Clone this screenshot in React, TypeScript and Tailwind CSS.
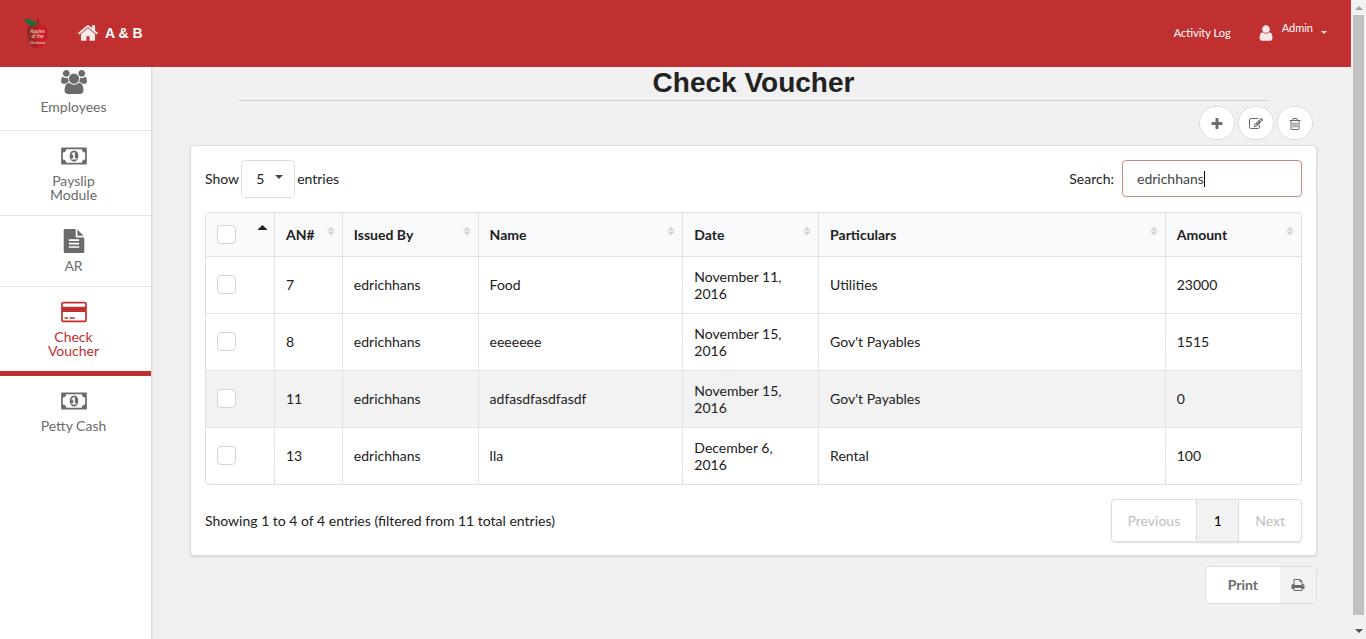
import { useState } from "react";
import clsx from "clsx";

type IconName = "home" | "users" | "money" | "file" | "card" | "plus" | "edit" | "trash" | "print" | "user";

const ICONS: Record<IconName, { w: number; d: string }> = {
  home: {
    w: 1792,
    d: "M1472 992v480q0 26-19 45t-45 19h-384v-384h-256v384h-384q-26 0-45-19t-19-45v-480q0-1 .5-3t.5-3l575-474 575 474q1 2 1 6zm223-69l-62 74q-8 9-21 11h-3q-13 0-21-7l-692-577-692 577q-12 8-24 7-13-2-21-11l-62-74q-8-10-7-23.5t11-21.5l719-599q32-26 76-26t76 26l244 204v-195q0-14 9-23t23-9h192q14 0 23 9t9 23v408l219 182q10 8 11 21.5t-7 23.5z",
  },
  users: {
    w: 1920,
    d: "M593 896q-162 5-265 128h-134q-82 0-138-40.5t-56-118.5q0-353 124-353 6 0 43.5 21t97.5 42.5 119 21.5q67 0 133-23-5 37-5 66 0 139 81 256zm1071 637q0 120-73 189.5t-194 69.5h-874q-121 0-194-69.5t-73-189.5q0-53 3.5-103.5t14-109 26.5-108.5 43-97.5 62-81 85.5-53.5 111.5-20q10 0 43 21.5t73 48 107 48 135 21.5 135-21.5 107-48 73-48 43-21.5q61 0 111.5 20t85.5 53.5 62 81 43 97.5 26.5 108.5 14 109 3.5 103.5zm-1024-1277q0 106-75 181t-181 75-181-75-75-181 75-181 181-75 181 75 75 181zm704 384q0 159-112.5 271.5t-271.5 112.5-271.5-112.5-112.5-271.5 112.5-271.5 271.5-112.5 271.5 112.5 112.5 271.5zm576 225q0 78-56 118.5t-138 40.5h-134q-103-123-265-128 81-117 81-256 0-29-5-66 66 23 133 23 59 0 119-21.5t97.5-42.5 43.5-21q124 0 124 353zm-128-609q0 106-75 181t-181 75-181-75-75-181 75-181 181-75 181 75 75 181z",
  },
  money: {
    w: 1920,
    d: "M768 1152h384v-96h-128v-448h-114l-148 137 77 80q42-37 55-57h2v288h-128v96zm512-256q0 70-21 142t-59.5 134-101.5 101-138 39-138-39-101.5-101-59.5-134-21-142 21-142 59.5-134 101.5-101 138-39 138 39 101.5 101 59.5 134 21 142zm512 256v-512q-106 0-181-75t-75-181h-1152q0 106-75 181t-181 75v512q106 0 181 75t75 181h1152q0-106 75-181t181-75zm128-832v1152q0 26-19 45t-45 19h-1792q-26 0-45-19t-19-45v-1152q0-26 19-45t45-19h1792q26 0 45 19t19 45z",
  },
  file: {
    w: 1792,
    d: "M1596 476q14 14 28 36h-472v-472q22 14 36 28zm-476 164h544v1056q0 40-28 68t-68 28h-1344q-40 0-68-28t-28-68v-1600q0-40 28-68t68-28h800v544q0 40 28 68t68 28zm160 736v-64q0-14-9-23t-23-9h-704q-14 0-23 9t-9 23v64q0 14 9 23t23 9h704q14 0 23-9t9-23zm0-256v-64q0-14-9-23t-23-9h-704q-14 0-23 9t-9 23v64q0 14 9 23t23 9h704q14 0 23-9t9-23zm0-256v-64q0-14-9-23t-23-9h-704q-14 0-23 9t-9 23v64q0 14 9 23t23 9h704q14 0 23-9t9-23z",
  },
  card: {
    w: 1920,
    d: "M1760 128q66 0 113 47t47 113v1216q0 66-47 113t-113 47h-1600q-66 0-113-47t-47-113v-1216q0-66 47-113t113-47h1600zm-1600 128q-13 0-22.5 9.5t-9.5 22.5v224h1664v-224q0-13-9.5-22.5t-22.5-9.5h-1600zm1600 1280q13 0 22.5-9.5t9.5-22.5v-608h-1664v608q0 13 9.5 22.5t22.5 9.5h1600zm-1504-128v-128h256v128h-256zm384 0v-128h384v128h-384z",
  },
  plus: {
    w: 1792,
    d: "M1600 736v192q0 40-28 68t-68 28h-416v416q0 40-28 68t-68 28h-192q-40 0-68-28t-28-68v-416h-416q-40 0-68-28t-28-68v-192q0-40 28-68t68-28h416v-416q0-40 28-68t68-28h192q40 0 68 28t28 68v416h416q40 0 68 28t28 68z",
  },
  edit: {
    w: 1792,
    d: "M888 1184l116-116-152-152-116 116v56h96v96h56zm440-720q-16-16-33 1l-350 350q-17 17-1 33t33-1l350-350q17-17 1-33zm80 594v190q0 119-84.5 203.5t-203.5 84.5h-832q-119 0-203.5-84.5t-84.5-203.5v-832q0-119 84.5-203.5t203.5-84.5h832q63 0 117 25 15 7 18 23 3 17-9 29l-49 49q-14 14-32 8-23-6-45-6h-832q-66 0-113 47t-47 113v832q0 66 47 113t113 47h832q66 0 113-47t47-113v-126q0-13 9-22l64-64q15-15 35-7t20 29zm-96-738l288 288-672 672h-288v-288zm444 132l-92 92-288-288 92-92q28-28 68-28t68 28l152 152q28 28 28 68t-28 68z",
  },
  trash: {
    w: 1792,
    d: "M704 736v576q0 14-9 23t-23 9h-64q-14 0-23-9t-9-23v-576q0-14 9-23t23-9h64q14 0 23 9t9 23zm256 0v576q0 14-9 23t-23 9h-64q-14 0-23-9t-9-23v-576q0-14 9-23t23-9h64q14 0 23 9t9 23zm256 0v576q0 14-9 23t-23 9h-64q-14 0-23-9t-9-23v-576q0-14 9-23t23-9h64q14 0 23 9t9 23zm128 724v-948h-896v948q0 22 7 40.5t14.5 27 10.5 8.5h832q3 0 10.5-8.5t14.5-27 7-40.5zm-672-1076h448l-48-117q-7-9-17-11h-317q-10 2-17 11zm928 32v64q0 14-9 23t-23 9h-96v948q0 83-47 143.5t-113 60.5h-832q-66 0-113-58.5t-47-141.5v-952h-96q-14 0-23-9t-9-23v-64q0-14 9-23t23-9h309l70-167q15-37 54-63t79-26h320q40 0 79 26t54 63l70 167h309q14 0 23 9t9 23z",
  },
  print: {
    w: 1792,
    d: "M448 1536h896v-256h-896v256zm0-640h896v-384h-160q-40 0-68-28t-28-68v-160h-640v640zm1152 64q0-26-19-45t-45-19-45 19-19 45 19 45 45 19 45-19 19-45zm128 0v416q0 13-9.5 22.5t-22.5 9.5h-224v160q0 40-28 68t-68 28h-960q-40 0-68-28t-28-68v-160h-224q-13 0-22.5-9.5t-9.5-22.5v-416q0-79 56.5-135.5t135.5-56.5h64v-544q0-40 28-68t68-28h672q40 0 88 20t76 48l152 152q28 28 48 76t20 88v256h64q79 0 135.5 56.5t56.5 135.5z",
  },
  user: {
    w: 1792,
    d: "M1536 1399q0 109-62.5 187t-150.5 78h-854q-88 0-150.5-78t-62.5-187q0-85 8.5-160.5t31.5-152 58.5-131 94-89 134.5-34.5q131 128 313 128t313-128q76 0 134.5 34.5t94 89 58.5 131 31.5 152 8.5 160.5zm-256-887q0 159-112.5 271.5t-271.5 112.5-271.5-112.5-112.5-271.5 112.5-271.5 271.5-112.5 271.5 112.5 112.5 271.5z",
  },
};

function Icon({ name, className }: { name: IconName; className: string }) {
  const { w, d } = ICONS[name];
  return (
    <svg aria-hidden="true" viewBox={`0 0 ${w} 1792`} className={clsx("shrink-0 fill-current", className)}>
      <path d={d} />
    </svg>
  );
}

function AppleLogo() {
  return (
    <svg aria-hidden="true" viewBox="0 0 24 32" className="h-8 w-6">
      <defs>
        <linearGradient id="apple" x1="0" x2="1">
          <stop offset="0" stopColor="#8a2a20" />
          <stop offset="0.4" stopColor="#a32420" />
          <stop offset="0.75" stopColor="#dc1c28" />
          <stop offset="1" stopColor="#b01c24" />
        </linearGradient>
      </defs>
      <path d="M13 9C9 6.500 3.500 8 3 14c-.4 6 2.500 14 6.500 16.500 1.500.9 2.500.1 4 .1s2.500.8 4-.1C21 28 23.600 20 23.300 14 23 8 17 6.500 13 9z" fill="url(#apple)" />
      <path d="M13.200 10C13.700 7 13.500 4.500 12.300 2.500l1.800-.5c1 2.500.9 5 .1 8z" fill="#7a2c1c" />
      <path d="M.5.800C3 3 10.500 1.500 12.800 8.300 8 9.500 1.500 8.500.5.800z" fill="#12703a" />
      <g fill="#e9b3ae" fontFamily="Liberation Sans, sans-serif" fontSize="4.500" fontStyle="italic" fontWeight="700" textAnchor="middle">
        <text x="13.500" y="15.500">Apples</text>
        <text x="13.500" y="21">of the</text>
        <text x="13.500" y="26.500" fontSize="4">Orchard</text>
      </g>
    </svg>
  );
}

function Caret({ className }: { className: string }) {
  return (
    <svg aria-hidden="true" viewBox="0 0 8 4" className={clsx("fill-current", className)}>
      <path d="M0 0h8L4 4z" />
    </svg>
  );
}

function SortMark({ ascending }: { ascending?: boolean }) {
  return ascending ? (
    <svg aria-hidden="true" viewBox="0 0 9 5" className="h-[5px] w-[9px] fill-[#222]">
      <path d="M4.500 0 9 4.200V5H0v-.8z" />
    </svg>
  ) : (
    <svg aria-hidden="true" viewBox="0 0 8 10" className="h-[10px] w-2 fill-[#d6d7d8]">
      <path d="M4 .5 7.500 4v.5h-7V4zM4 9.500.5 6v-.5h7V6z" />
    </svg>
  );
}

const NAV: { label: string; icon: IconName; active?: boolean }[] = [
  { label: "Employees", icon: "users" },
  { label: "Payslip Module", icon: "money" },
  { label: "AR", icon: "file" },
  { label: "Check Voucher", icon: "card", active: true },
  { label: "Petty Cash", icon: "money" },
];

const COLUMNS = [
  { label: "AN#", width: "w-[6.2%]" },
  { label: "Issued By", width: "w-[12.4%]" },
  { label: "Name", width: "w-[18.7%]" },
  { label: "Date", width: "w-[12.4%]" },
  { label: "Particulars", width: "w-auto" },
  { label: "Amount", width: "w-[12.4%]" },
];

const ROWS = [
  ["7", "edrichhans", "Food", "November 11, 2016", "Utilities", "23000"],
  ["8", "edrichhans", "eeeeeee", "November 15, 2016", "Gov't Payables", "1515"],
  ["11", "edrichhans", "adfasdfasdfasdf", "November 15, 2016", "Gov't Payables", "0"],
  ["13", "edrichhans", "lla", "December 6, 2016", "Rental", "100"],
];

function Checkbox({ label }: { label: string }) {
  return (
    <input
      type="checkbox"
      aria-label={label}
      className="block size-[19px] appearance-none rounded-[4px] border border-[#d4d4d5] bg-white checked:bg-[#c03030]"
    />
  );
}

function RoundButton({ icon, label }: { icon: IconName; label: string }) {
  return (
    <button
      type="button"
      aria-label={label}
      className="flex h-[34px] w-9 items-center justify-center rounded-full border border-[#dededf] bg-white pt-px text-[#6b6b6b]"
    >
      <Icon name={icon} className="size-[14px]" />
    </button>
  );
}

export default function App() {
  const [query, setQuery] = useState("edrichhans");

  return (
    <div className="flex min-h-screen bg-[#f1f1f1] font-[Lato,sans-serif] text-sm text-[#212121]">
      <div className="flex min-w-0 flex-1 flex-col">
        <header className="flex h-[67px] items-center bg-[#c03030] pr-6 pb-px pl-6 text-white/90">
          <AppleLogo />
          <a href="#home" className="ml-[29px] flex items-center font-[Liberation_Sans,sans-serif] font-bold text-white">
            <Icon name="home" className="mr-[6px] size-[22px] text-white/90" />
            <span>A &amp; B</span>
          </a>
          <a href="#activity" className="ml-auto text-[11px] text-white">
            Activity Log
          </a>
          <button type="button" className="ml-[26px] flex items-center text-[11px]">
            <Icon name="user" className="size-[18px]" />
            <span className="mb-[10px] ml-[7px] text-white">Admin</span>
            <Caret className="ml-2 h-[3px] w-[6px]" />
          </button>
        </header>

        <div className="flex flex-1">
          <nav className="w-[152px] shrink-0 border-r border-[#dcdcdc] bg-white leading-[14px] text-[#6b6b6b] shadow-[1px_0_0_0_#e4e4e4]">
            {NAV.map((item, index) => (
              <a
                key={item.label}
                href={`#${item.icon}`}
                className={clsx(
                  "flex flex-col items-center gap-[6px] pr-10 pl-9 text-center",
                  index === 0 ? "pt-[3px] pb-4" : "py-[13px]",
                  item.active && "border-b-[5px] border-[#c03030] text-[#c03030]",
                  !item.active && index < NAV.length - 1 && "border-b border-[#e4e4e5]",
                )}
              >
                <Icon name={item.icon} className="h-6 w-[26px]" />
                <span>{item.label}</span>
              </a>
            ))}
          </nav>

          <main className="min-w-0 flex-1 pr-[34px] pl-[38px]">
            <h1 className="mx-[49px] border-b border-[#d0d0d1] pb-[2px] text-center font-[Liberation_Sans,sans-serif] text-[28px] leading-[31px] font-bold text-[#222]">
              Check Voucher
            </h1>

            <div className="mt-[5px] mr-1 flex justify-end gap-[3px]">
              <RoundButton icon="plus" label="Add voucher" />
              <RoundButton icon="edit" label="Edit voucher" />
              <RoundButton icon="trash" label="Delete voucher" />
            </div>

            <section className="mt-[5px] rounded-[4px] border border-[#dededf] bg-white px-[14px] pt-[14px] pb-[13px] shadow-[0_1px_2px_0_rgba(34,36,38,0.15)]">
              <div className="flex items-start justify-between">
                <label className="flex items-center gap-[2px]">
                  Show
                  <span className="relative flex">
                    <select
                      defaultValue="5"
                      className="h-[38px] w-[54px] appearance-none rounded-[4px] border border-[#dededf] bg-white pl-[14px]"
                    >
                      <option>5</option>
                      <option>10</option>
                      <option>25</option>
                    </select>
                    <Caret className="pointer-events-none absolute top-[15px] right-3 h-1 w-2 text-[#444]" />
                  </span>
                  entries
                </label>
                <label className="flex items-center gap-2">
                  Search:
                  <span className="flex h-[37px] w-[180px] items-center overflow-hidden rounded-[4px] border border-[#d08a8a] px-[14px]">
                    <input
                      type="text"
                      value={query}
                      onChange={(event) => setQuery(event.target.value)}
                      className="min-w-0 text-[#444] caret-transparent outline-none [field-sizing:content]"
                    />
                    <span aria-hidden="true" className="h-4 w-px shrink-0 bg-black" />
                  </span>
                </label>
              </div>

              <div className="mt-[14px] overflow-hidden rounded-[4px] border border-[#dededf]">
                <table className="w-full table-fixed text-left leading-[17px]">
                  <thead className="bg-[#f9fafb]">
                    <tr className="h-[43px] border-b border-[#dfe0e1]">
                      <th className="w-[6.25%] pr-[7px] pl-[11px]">
                        <div className="flex justify-between">
                          <Checkbox label="Select all" />
                          <SortMark ascending />
                        </div>
                      </th>
                      {COLUMNS.map((column) => (
                        <th key={column.label} className={clsx("border-l border-[#dfe0e1] pr-[7px] pl-[11px]", column.width)}>
                          <div className="flex justify-between">
                            {column.label}
                            <SortMark />
                          </div>
                        </th>
                      ))}
                    </tr>
                  </thead>
                  <tbody>
                    {ROWS.map((row, index) => (
                      <tr
                        key={row[0]}
                        className={clsx(
                          "h-[57px]",
                          index < ROWS.length - 1 && "border-b border-[#e4e4e5]",
                          index === 2 && "bg-[#f2f2f2]",
                        )}
                      >
                        <td className="px-[11px]">
                          <Checkbox label={`Select voucher ${row[0]}`} />
                        </td>
                        {row.map((cell, cellIndex) => (
                          <td key={cellIndex} className="border-l border-[#e4e4e5] px-[11px]">
                            {cell}
                          </td>
                        ))}
                      </tr>
                    ))}
                  </tbody>
                </table>
              </div>

              <div className="mt-[14px] flex items-center justify-between">
                <p>Showing 1 to 4 of 4 entries (filtered from 11 total entries)</p>
                <div className="flex h-[43px] overflow-hidden rounded-[4px] border border-[#dededf] shadow-[0_1px_2px_0_rgba(34,36,38,0.15)]">
                  <button type="button" disabled className="px-4 text-[#c0c0c0]">
                    Previous
                  </button>
                  <button type="button" className="w-[43px] border-x border-[#dededf] bg-[#f2f2f2] text-black">
                    1
                  </button>
                  <button type="button" disabled className="px-4 text-[#c0c0c0]">
                    Next
                  </button>
                </div>
              </div>
            </section>

            <div className="mt-[10px] flex justify-end">
              <button
                type="button"
                className="flex h-[38px] overflow-hidden rounded-[4px] border border-[#dededf] bg-white font-bold text-[#6b6b6b]"
              >
                <span className="flex h-full items-center px-[22px]">Print</span>
                <span className="flex h-full w-9 items-center justify-center bg-[#f2f2f2]">
                  <Icon name="print" className="size-[14px]" />
                </span>
              </button>
            </div>
          </main>
        </div>
      </div>

      <div aria-hidden="true" className="flex w-[15px] shrink-0 flex-col items-center bg-[#f1f1f1] text-[#505050]">
        <Caret className="mt-[6px] mb-[5px] h-1 w-2 rotate-180 text-[#a3a3a3]" />
        <div className="w-[11px] flex-1 bg-[#c1c1c1]" />
        <Caret className="mt-[14px] mb-[6px] h-1 w-2" />
      </div>
    </div>
  );
}
